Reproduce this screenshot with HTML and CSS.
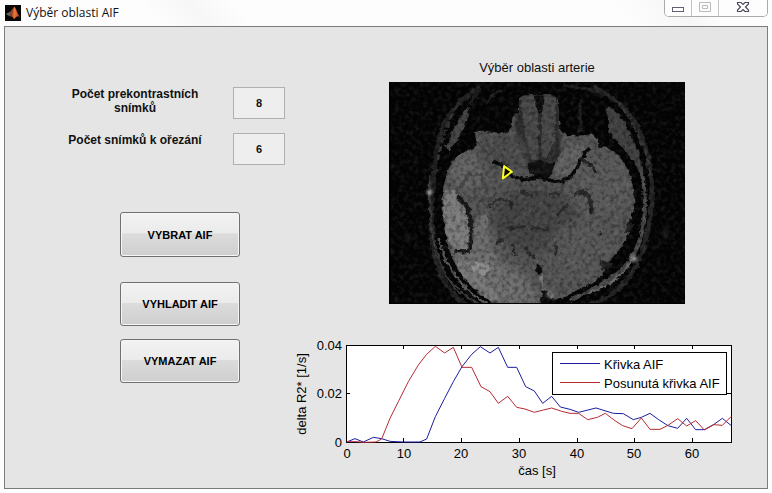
FILE: index.html
```html
<!DOCTYPE html>
<html lang="cs">
<head>
<meta charset="utf-8">
<meta name="viewport" content="width=device-width, initial-scale=1">
<title>Výběr oblasti AIF</title>
<link rel="stylesheet" href="styles.css">
</head>
<body>
<div class="window">
  <header class="titlebar">
    <svg class="app-icon" viewBox="0 0 48 48" aria-hidden="true">
      <defs><linearGradient id="flame"><stop offset="0" stop-color="#5a1408"/><stop offset=".45" stop-color="#e8793a"/><stop offset="1" stop-color="#a8381a"/></linearGradient></defs>
      <rect width="48" height="48" fill="#080706"/>
      <path d="M3 27L13 22L20 27L14 34Z" fill="#4d7f8d"/>
      <path d="M13 22C20 19 22 8 28 5L20 29L14 34L10 29Z" fill="#8b4636"/>
      <path d="M28 5C33 8 36 25 45 36C38 32 34 34 27 43C25 36 21 33 14 35C22 29 23 14 28 5Z" fill="url(#flame)"/>
    </svg>
    <h1 class="title">Výběr oblasti AIF</h1>
    <div class="controls">
      <button class="control" aria-label="Minimalizovat"><svg viewBox="0 0 14 12"><rect x="1.500" y="7.500" width="11" height="4" fill="#fff" stroke="#606070"/></svg></button>
      <button class="control" aria-label="Maximalizovat" disabled><svg viewBox="0 0 14 12"><path d="M1.500 2.500H12.500V11.500H1.500ZM4.500 5.500H9.500V8.500H4.500Z" fill="none" stroke="#bcbcc0"/></svg></button>
      <button class="control control-close" aria-label="Zavřít"><svg viewBox="0 0 14 12"><path d="M1.500 2.500H5L7 4.500L9 2.500H12.500V4L9.500 7L12.500 10V11.500H9L7 9.500L5 11.500H1.500V10L4.500 7L1.500 4Z" fill="#fff" stroke="#4a4a5e" stroke-width="1.200"/></svg></button>
    </div>
  </header>

  <main class="content">
    <form class="panel">
      <div class="fields">
        <label for="pre">Počet prekontrastních snímků</label>
        <input id="pre" type="text" value="8">
        <label for="crop">Počet snímků k ořezání</label>
        <input id="crop" type="text" value="6">
      </div>
      <div class="actions">
        <button class="action action-first" type="button">VYBRAT AIF</button>
        <button class="action" type="button">VYHLADIT AIF</button>
        <button class="action" type="button">VYMAZAT AIF</button>
      </div>
    </form>

    <div class="plots">
      <figure class="scan">
        <figcaption>Výběr oblasti arterie</figcaption>
        <svg class="scan-image" viewBox="12 12 888 666" role="img" aria-label="Snímek mozku">
          <defs>
            <filter id="soft" x="-20%" y="-20%" width="140%" height="140%"><feGaussianBlur stdDeviation="4"/></filter>
            <filter id="wide" x="-40%" y="-40%" width="180%" height="180%"><feGaussianBlur stdDeviation="14"/></filter>
            <filter id="rough" x="-10%" y="-10%" width="120%" height="120%"><feTurbulence type="fractalNoise" baseFrequency=".07" numOctaves="2" seed="4" result="n"/><feDisplacementMap in="SourceGraphic" in2="n" scale="16" xChannelSelector="R" yChannelSelector="G"/><feGaussianBlur stdDeviation="2"/></filter>
            <filter id="dark" x="0" y="0" width="100%" height="100%"><feTurbulence type="fractalNoise" baseFrequency=".08" numOctaves="3" seed="9"/><feColorMatrix values="0 0 0 0 0  0 0 0 0 0  0 0 0 0 0  .9 0 0 0 -.38"/></filter>
            <filter id="light" x="0" y="0" width="100%" height="100%"><feTurbulence type="fractalNoise" baseFrequency=".07" numOctaves="3" seed="21"/><feColorMatrix values="0 0 0 0 1  0 0 0 0 1  0 0 0 0 1  .2 0 0 0 -.090"/></filter>
            <clipPath id="frame"><rect x="12" y="12" width="888" height="666"/></clipPath>
            <clipPath id="brain"><path id="brainShape" d="M172 360C174 315 188 265 212 240C232 218 258 214 275 207L270 162C290 150 310 168 345 166C375 168 382 150 386 105L402 105C400 70 400 52 420 52H505C524 62 520 120 522 160C548 156 535 182 572 172C600 176 616 158 638 184L640 207C675 206 700 225 715 255C735 280 746 325 748 385C740 420 728 430 728 462C725 500 682 530 665 563C650 605 600 625 560 645C530 662 505 672 488 655L474 678H350C290 667 240 615 206 548C185 505 170 430 172 360Z"/></clipPath>
          </defs>
          <rect x="12" y="12" width="888" height="666" fill="#030303"/>
          <g clip-path="url(#frame)">
            <g fill="none" filter="url(#rough)">
              <path d="M285 28C215 70 172 120 158 200C144 290 132 390 143 500C155 580 190 650 245 678" stroke="#202020" stroke-width="15"/>
              <path d="M215 85C185 130 168 200 158 250" stroke="#343434" stroke-width="7" stroke-dasharray="16 10"/>
              <path d="M135 290C128 420 145 530 185 595C210 635 240 658 280 676" stroke="#3a3a3a" stroke-width="6"/>
              <path d="M160 480C180 565 225 630 312 680" stroke="#595959" stroke-width="7"/>
              <path d="M625 28C710 65 765 135 786 230C815 350 795 500 735 592C700 640 650 672 600 682" stroke="#242424" stroke-width="14"/>
              <path d="M690 65C745 120 780 200 793 290" stroke="#353535" stroke-width="8" stroke-dasharray="20 9"/>
              <path d="M765 265C792 380 780 500 720 563C680 610 610 638 555 666" stroke="#484848" stroke-width="12"/>
              <path d="M740 545C718 588 675 620 610 645" stroke="#686868" stroke-width="7"/>
              <path d="M535 20C590 35 630 28 650 55M285 30L255 75M585 70V165M345 35L300 75" stroke="#1d1d1d" stroke-width="10"/>
              <path d="M250 85C253 125 235 170 190 220L183 207C202 165 218 120 250 85Z" fill="#464646"/>
              <path d="M665 85C705 95 720 140 755 210C772 245 772 275 765 285C735 235 705 194 670 167Z" fill="#404040"/>
            </g>
            <use href="#brainShape" fill="#545454" filter="url(#rough)"/>
            <g clip-path="url(#brain)">
              <path d="M390 45H525V245L475 270H430L390 190Z" fill="#2c2c2c" filter="url(#soft)"/>
              <g filter="url(#wide)">
                <ellipse cx="448" cy="423" rx="125" ry="98" fill="#444"/>
                <ellipse cx="650" cy="320" rx="95" ry="95" fill="#5a5a5a"/>
                <ellipse cx="355" cy="220" rx="75" ry="55" fill="#4c4c4c"/>
                <path d="M200 530L300 430L345 550L420 590L470 678H330Z" fill="#6e6e6e"/>
                <ellipse cx="590" cy="520" rx="100" ry="90" fill="#585858"/>
                <ellipse cx="245" cy="280" rx="55" ry="55" fill="#646464"/>
              </g>
              <g filter="url(#rough)">
                <path d="M181 335C202 326 225 345 240 380C253 420 255 475 237 522L203 510C177 465 167 390 181 335Z" fill="#7b7b7b"/>
                <path d="M207 537L250 550L310 610L345 670L300 660C258 625 220 586 207 537Z" fill="#787878"/>
                <path d="M274 421L305 407L310 500L286 540L260 520Z" fill="#6c6c6c"/>
                <ellipse cx="286" cy="572" rx="28" ry="20" fill="#8b8b8b"/>
                <path d="M405 55L447 53L459 105L458 245L438 246L420 170ZM475 55L513 55L510 190L480 245L466 220Z" fill="#484848"/>
                <path d="M448 47H475L470 105L460 109Z" fill="#0b0b0b"/>
                <path d="M547 195L613 207C601 238 579 280 538 296L480 289L512 250Z" fill="#606060"/>
              </g>
            </g>
            <g fill="none" filter="url(#rough)" stroke="#060606">
              <path d="M428 258L460 248L508 257L500 292L462 300L433 282Z" fill="#101010"/>
              <path d="M322 249L354 263L384 296L421 306L463 295L502 308C540 320 570 290 588 240L615 210" stroke-width="11"/>
              <path d="M584 240L616 260L633 285" stroke="#1c1c1c" stroke-width="9"/>
              <path d="M218 355L245 385L257 430L259 485L250 520L208 518" stroke-width="13" stroke="#181818"/>
              <path d="M453 557L472 565L465 588L450 578Z" fill="#0b0b0b"/>
              <path d="M469 590L472 678" stroke="#777" stroke-width="8"/>
              <path d="M471 633L499 651L490 672L467 676Z" fill="#080808"/>
              <path d="M565 350C590 334 614 347 617 382V408" stroke="#282828" stroke-width="12"/>
              <path d="M516 412L550 376M310 385L343 362L380 370L375 395M438 447L490 455M330 495L355 483M364 450L420 445M515 500L511 528M380 495L395 535M420 510L450 545M405 340L440 355M490 350L520 345" stroke="#2a2a2a" stroke-width="9"/>
              <path d="M210 345L250 292L290 288L305 330M275 370L330 360" stroke="#4a4a4a" stroke-width="8"/>
              <path d="M644 550L684 555L675 572L647 572ZM727 435L747 440L740 460L720 460Z" fill="#202020"/>
              <ellipse cx="645" cy="467" rx="4" ry="7" fill="#252525"/>
            </g>
            <g fill="#a7a7a7" filter="url(#soft)"><circle cx="133" cy="342" r="8"/><path d="M739 530L755 536L751 550H736Z"/><path d="M488 640L506 650L497 662L484 652Z" fill="#999"/><ellipse cx="841" cy="463" rx="10" ry="20" fill="#181818"/><circle cx="69" cy="479" r="12" fill="#151515"/></g>
            <rect x="12" y="12" width="888" height="666" filter="url(#dark)"/>
            <rect x="12" y="12" width="888" height="666" filter="url(#light)"/>
          </g>
          <path d="M357 264L380 281L353 301Z" fill="#080808" stroke="#ffff20" stroke-width="6" stroke-linejoin="round"/>
          <path d="M14 12V676H900" fill="none" stroke="#000" stroke-width="4"/>
        </svg>
      </figure>

      <svg class="chart" viewBox="0 0 450 146" role="img" aria-label="Křivka AIF a posunutá křivka AIF">
        <rect x="56.500" y="10.500" width="385" height="97" fill="#fff" stroke="#000"/>
        <g transform="scale(.333333)" fill="none" stroke-width="3" stroke-linejoin="round">
          <path stroke="#1c1ca0" d="M170 321L195 311L220 321L250 307L275 311L300 319L340 321L390 321L410 312L436 245L464 190L490 140L516 95L545 58L571 35L600 54L625 37L653 97L680 97L707 155L733 168L758 205L785 184L811 216L840 223L866 232L918 219L970 235L1000 236L1030 254L1054 247L1080 235L1106 254L1134 272L1163 280L1190 250L1217 284L1243 284L1272 268L1297 250L1324 272"/>
          <path stroke="#b62a32" d="M170 320L200 320L220 322L258 321L275 312L300 250L325 200L355 140L385 90L410 58L436 34L464 54L490 37L516 97L545 97L573 155L600 170L625 205L653 184L680 217L705 222L733 232L760 225L785 219L815 229L840 235L866 235L893 254L922 247L946 235L972 255L998 272L1026 281L1054 249L1080 283L1110 283L1134 271L1163 251L1190 273L1217 257L1243 285L1272 269L1297 271L1324 244"/>
        </g>
        <path d="M113.500 10V14M171.500 10V14M229.500 10V14M287.500 10V14M344.500 10V14M402.500 10V14M113.500 107V103M171.500 107V103M229.500 107V103M287.500 107V103M344.500 107V103M402.500 107V103M56 58.500H60M441 58.500H437" stroke="#000"/>
        <g class="ticks-y"><text x="52" y="15">0.04</text><text x="52" y="63">0.02</text><text x="52" y="112">0</text></g>
        <g class="ticks-x"><text x="57" y="123">0</text><text x="114" y="123">10</text><text x="171" y="123">20</text><text x="229" y="123">30</text><text x="287" y="123">40</text><text x="344" y="123">50</text><text x="402" y="123">60</text><text x="247" y="140">čas [s]</text><text transform="translate(16 59) rotate(-90)">delta R2* [1/s]</text></g>
        <rect x="262.500" y="17.500" width="174" height="42" fill="#fff" stroke="#000"/>
        <path d="M270 28.500H310" stroke="#1c1ca0"/>
        <path d="M270 47.500H310" stroke="#b62a32"/>
        <text x="314" y="34">Křivka AIF</text>
        <text x="314" y="53">Posunutá křivka AIF</text>
      </svg>
    </div>
  </main>
</div>
</body>
</html>
```
FILE: styles.css
```css
* { box-sizing: border-box; }

body {
  margin: 0;
  background: #fdfdfd;
  color: #111;
  font-family: "Liberation Sans", Arial, sans-serif;
}

.window {
  display: flex;
  flex-direction: column;
  min-height: 100vh;
  padding: 0 4px 4px;
}

.titlebar {
  display: flex;
  align-items: center;
  gap: 5px;
  height: 26px;
  padding-left: 1px;
  background: linear-gradient(50deg, #fdfdfd 20%, #f7f7f7 26%, #fdfdfd 32%, #fdfdfd 80%, #f6f6f6 88%, #fdfdfd 92%);
}

.app-icon { width: 16px; height: 16px; }

.title {
  flex: 1;
  margin: 0;
  font: 12px/20px "Open Sans", sans-serif;
}

.controls {
  display: flex;
  align-self: flex-start;
  height: 17px;
  border: 1px solid #aaa;
  border-top: 0;
  border-radius: 0 0 5px 5px;
  overflow: hidden;
}

.control {
  display: flex;
  justify-content: center;
  width: 27px;
  padding: 0;
  border: 0;
  border-right: 1px solid #c4c4c4;
  background: #fdfdfd;
}

.control-close { width: 48px; border-right: 0; }
.control svg { width: 14px; height: 12px; }

.content {
  flex: 1;
  display: grid;
  grid-template-columns: minmax(0, 285fr) minmax(0, 450fr);
  align-items: start;
  padding-right: 27px;
  border: 1px solid #7c7c7c;
  background: #e5e5e5;
}

.panel { padding-top: 60px; }

.fields {
  display: grid;
  grid-template-columns: 140px 52px;
  column-gap: 28px;
  row-gap: 14px;
  justify-content: end;
  padding-right: 5px;
  font-size: 12px;
  font-weight: bold;
  line-height: 14px;
  text-align: center;
}

.fields input {
  width: 100%;
  height: 32px;
  border: 1px solid #b0b0b0;
  background: #eee;
  color: inherit;
  font: bold 11px/14px "Liberation Sans", Arial, sans-serif;
  text-align: center;
}

.actions {
  display: flex;
  flex-direction: column;
  gap: 13px;
  width: 120px;
  margin: 47px 50px 0 auto;
}

.action {
  height: 44px;
  padding: 0;
  border: 1px solid #707070;
  border-radius: 3px;
  background: linear-gradient(#f2f2f2, #ebebeb 47%, #dcdcdc 48%, #cecece);
  box-shadow: inset 0 0 0 1px #f6f6f6;
  color: #000;
  font: bold 11px/14px "Liberation Sans", Arial, sans-serif;
}

.action-first { height: 45px; margin-bottom: 12px; }

.scan {
  display: flex;
  flex-direction: column;
  align-items: center;
  gap: 6px;
  margin: 0;
  padding: 33px 0 31px 44px;
  font-size: 13px;
  line-height: 16px;
}

.scan-image { width: 73%; }
.scan-image filter { color-interpolation-filters: sRGB; }

.chart {
  display: block;
  width: 100%;
  font-size: 13px;
}

.ticks-y { text-anchor: end; }
.ticks-x { text-anchor: middle; }
```
